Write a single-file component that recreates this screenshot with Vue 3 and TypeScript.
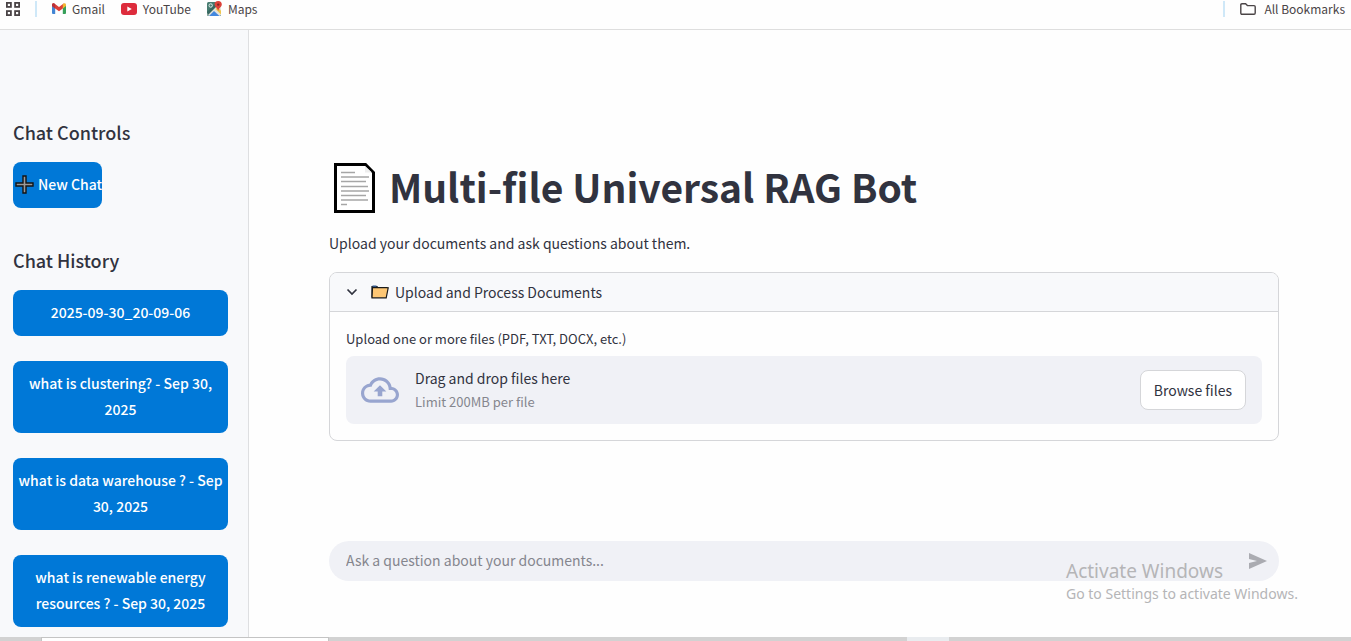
<script setup lang="ts">
import { ref } from 'vue'

const question = ref('')
const picker = ref<HTMLInputElement | null>(null)
const chats: string[] = [
  '2025-09-30_20-09-06',
  'what is clustering? - Sep 30, 2025',
  'what is data warehouse ? - Sep 30, 2025',
  'what is renewable energy resources ? - Sep 30, 2025',
]

function browse(): void {
  picker.value?.click()
}
</script>

<template>
  <div class="screen">
    <nav class="bookmarks" aria-label="Bookmarks">
      <button class="apps" type="button" aria-label="Apps">
        <svg width="14" height="14" viewBox="0 0 14 14" fill="none" stroke="#4a4446" stroke-width="1.8">
          <rect x="0.9" y="0.9" width="4" height="4" /><rect x="9.1" y="0.9" width="4" height="4" />
          <rect x="0.9" y="9.1" width="4" height="4" /><rect x="9.1" y="9.1" width="4" height="4" />
        </svg>
      </button>
      <span class="divider"></span>
      <a class="mark gmail" href="#">
        <svg width="14" height="11" viewBox="0 0 14 11">
          <path d="M0 2v8q0 1 1 1h2.2V4.5z" fill="#4285d4" />
          <path d="M14 2v8q0 1-1 1h-2.2V4.5z" fill="#36a05a" />
          <path d="M0 1.6Q.4 0 2 .3L7 4.1 12 .3 10.8 5.4 7 8.3 3.2 5.4 0 3z" fill="#dc3f38" />
          <path d="M10.8 1.2V5.4L14 3V1.6Q13.7 0 12 .3z" fill="#f2b632" />
          <path d="M0 1.6Q.4 0 2 .3l1.2.9v4.2L0 3z" fill="#b8323a" />
        </svg>
        Gmail
      </a>
      <a class="mark youtube" href="#">
        <svg width="16" height="12" viewBox="0 0 16 12">
          <rect width="16" height="12" rx="3" fill="#dd2c3c" /><path d="M6.3 3.4v5.2L10.8 6z" fill="#fff" />
        </svg>
        YouTube
      </a>
      <a class="mark maps" href="#">
        <svg width="15" height="15" viewBox="0 0 15 15">
          <rect y="1" width="14" height="14" rx="1.5" fill="#477b70" />
          <path d="M0 13 11 2l3 3v8.5L12.5 15H2z" fill="#e6e4dc" />
          <path d="M2 15l5-5 5.5 5z" fill="#4388de" />
          <path d="M0 11 9.5 1.5l2 2L1 14z" fill="#376861" />
          <path d="M8.5 8l5.5 5.5v-4L10.5 6z" fill="#efc64d" />
          <circle cx="3.7" cy="4.5" r="1.7" fill="none" stroke="#dcece8" />
          <path d="M11.2 0a3.6 3.6 0 0 1 3.6 3.6c0 2.4-2.7 3-3.6 6.4-.9-3.4-3.6-4-3.6-6.4A3.6 3.6 0 0 1 11.2 0z" fill="#dc4038" />
          <circle cx="11.2" cy="3.6" r="1.2" fill="#802824" />
        </svg>
        Maps
      </a>
      <span class="divider last"></span>
      <a class="mark all" href="#">
        <svg width="16" height="12" viewBox="0 0 16 12" fill="none" stroke="#4a4446" stroke-width="1.4">
          <path d="M.8 10V2Q.8.8 2 .8h3.6l1.8 1.8H14q1.2 0 1.2 1.2V10q0 1.2-1.2 1.2H2Q.8 11.2.8 10z" />
        </svg>
        All Bookmarks
      </a>
    </nav>

    <div class="body">
      <aside class="sidebar">
        <h2>Chat Controls</h2>
        <button class="chat new" type="button">
          <svg width="19" height="19" viewBox="0 0 19 19">
            <path d="M8 1h3v7h7v3h-7v7H8v-7H1V8h7z" fill="#999" stroke="#141414" stroke-width="1.4" />
          </svg>
          <span>New Chat</span>
        </button>
        <h2 class="history-title">Chat History</h2>
        <div class="history">
          <button v-for="chat in chats" :key="chat" class="chat" type="button">{{ chat }}</button>
        </div>
      </aside>

      <main class="main">
        <h1>
          <svg width="41" height="50" viewBox="0 0 41 50">
            <path d="M1.5 1.5H31.500L39.500 9.500V48.500H1.500z" fill="#fff" stroke="#000" stroke-width="3" />
            <path d="M31 3v6.500H38z" fill="#eee" />
            <path d="M7 9.500h14M7 14h28M7 18.500h25M7 23.500h27M7 28h28M7 32.500h25M7 37h27M7 41.500h6" stroke="#a6a6a6" stroke-width="1.500" />
          </svg>
          <span>Multi-file Universal RAG Bot</span>
        </h1>
        <p class="intro">Upload your documents and ask questions about them.</p>

        <details class="panel" open>
          <summary>
            <svg width="12" height="8" viewBox="0 0 12 8" fill="none" stroke="#31333f" stroke-width="1.7">
              <path d="M1.500 1.500 6 6l4.500-4.500" />
            </svg>
            <svg class="folder" width="18" height="14" viewBox="0 0 18 14">
              <path d="M1 12.500V1.500h5l1 1.500h8v2" fill="#dc9d4f" stroke="#1a1a1a" stroke-width="1.200" />
              <path d="M1.500 2.600h14l1.700.2-2 10H1z" fill="#fec774" stroke="#1a1a1a" stroke-width="1.200" />
              <path d="M1.500 1.300h4" stroke="#32588c" stroke-width="1.500" />
            </svg>
            Upload and Process Documents
          </summary>
          <div class="panel-body">
            <label for="files">Upload one or more files (PDF, TXT, DOCX, etc.)</label>
            <input id="files" ref="picker" type="file" multiple hidden />
            <div class="dropzone">
              <svg width="38" height="38" viewBox="0 0 24 24" fill="#98a5cf">
                <path d="M19.350 10.040C18.670 6.590 15.640 4 12 4 9.110 4 6.600 5.640 5.350 8.040 2.340 8.360 0 10.910 0 14c0 3.310 2.690 6 6 6h13c2.760 0 5-2.240 5-5 0-2.640-2.050-4.780-4.650-4.960zM19 18H6c-2.210 0-4-1.790-4-4s1.790-4 4-4h.71C7.370 7.690 9.480 6 12 6c3.040 0 5.500 2.460 5.500 5.500v.5H19c1.660 0 3 1.340 3 3s-1.340 3-3 3zM8 13h2.550v3h2.900v-3H16l-4-4z" />
              </svg>
              <div class="drop-text">
                <span>Drag and drop files here</span>
                <small>Limit 200MB per file</small>
              </div>
              <button class="browse" type="button" @click="browse">Browse files</button>
            </div>
          </div>
        </details>

        <form class="ask" @submit.prevent>
          <input v-model="question" type="text" placeholder="Ask a question about your documents..." aria-label="Ask a question about your documents" />
          <button type="submit" aria-label="Send">
            <svg width="18" height="16" viewBox="0 0 18 16"><path d="M0 0 18 8 0 16v-6l8-2-8-2z" fill="#aaabb1" /></svg>
          </button>
        </form>
      </main>
    </div>

    <div class="taskbar"><span class="search"></span><span class="active"></span></div>

    <div class="watermark">
      <strong>Activate Windows</strong>
      <span>Go to Settings to activate Windows.</span>
    </div>
  </div>
</template>

<style>
body {
  margin: 0;
  background: #fefefe;
}
</style>

<style scoped>
* {
  box-sizing: border-box;
}
.screen {
  position: relative;
  display: flex;
  flex-direction: column;
  height: 100vh;
  overflow: hidden;
  color: #31333f;
  font: 400 14px/26px "Noto Sans CJK SC", "Noto Sans", sans-serif;
}
button {
  font: inherit;
  color: inherit;
  cursor: pointer;
}
.bookmarks {
  display: flex;
  flex: none;
  align-items: center;
  height: 30px;
  padding: 0 6px 12px;
  border-bottom: 1px solid #dedede;
  font-size: 12px;
  line-height: 18px;
}
.apps {
  display: flex;
  padding: 0;
  border: 0;
  background: none;
}
.divider {
  width: 2px;
  height: 16px;
  margin: 0 15px;
  background: #cfe8f8;
}
.divider.last {
  margin-left: auto;
}
.mark {
  display: flex;
  align-items: center;
  gap: 6px;
  color: #4a4446;
  text-decoration: none;
}
.mark + .mark {
  margin-left: 16px;
}
.mark.all {
  gap: 8px;
}
.body {
  display: flex;
  flex: 1;
  min-height: 0;
}
.sidebar {
  flex: none;
  width: 249px;
  padding: 89px 20px 0 13px;
  overflow: hidden;
  border-right: 1px solid #dedfe1;
  background: #f8f9fb;
}
h2 {
  margin: 0 0 17px;
  font-size: 18px;
  font-weight: 500;
  line-height: 26px;
}
.history-title {
  margin-top: 39px;
}
.history {
  display: flex;
  flex-direction: column;
  gap: 25px;
}
.chat {
  display: block;
  width: 100%;
  padding: 9px 4px 11px;
  border: 0;
  border-radius: 8px;
  background: #0078d7;
  color: #fff;
  font-weight: 500;
  text-align: center;
}
.chat.new {
  display: flex;
  align-items: center;
  gap: 4px;
  width: 89px;
  padding: 9px 2px 11px;
  overflow: hidden;
  white-space: nowrap;
}
.chat.new svg {
  flex: none;
}
.main {
  display: flex;
  flex: 1;
  flex-direction: column;
  min-width: 0;
  padding: 130px 72px 56px 80px;
}
h1 {
  display: flex;
  align-items: center;
  gap: 14px;
  height: 56px;
  margin: 0 0 14px;
  padding-left: 5px;
  font-size: 39px;
  font-weight: 700;
  line-height: 52px;
}
h1 span {
  padding-bottom: 4px;
}
.intro {
  margin: 0 0 16px;
}
.panel {
  overflow: hidden;
  border: 1px solid #d5d6d9;
  border-radius: 8px;
}
summary {
  display: flex;
  align-items: center;
  height: 39px;
  padding: 0 16px;
  border-bottom: 1px solid #d5d6d9;
  background: #f8f9fb;
  list-style: none;
  cursor: pointer;
}
.folder {
  margin: 0 6px 0 13px;
}
.panel-body {
  padding: 16px;
}
label {
  display: block;
  margin-bottom: 6px;
  font-size: 13px;
  line-height: 22px;
}
.dropzone {
  display: flex;
  align-items: center;
  height: 68px;
  padding: 0 16px 0 15px;
  border-radius: 8px;
  background: #f0f1f6;
}
.drop-text {
  display: flex;
  flex: 1;
  flex-direction: column;
  margin-left: 16px;
  line-height: 24px;
}
small {
  color: #85868e;
  font-size: 13px;
}
.browse {
  height: 40px;
  padding: 0 13px;
  border: 1px solid #d5d6d9;
  border-radius: 8px;
  background: #fff;
}
.ask {
  display: flex;
  align-items: center;
  height: 40px;
  margin-top: auto;
  padding: 0 12px 0 17px;
  border-radius: 20px;
  background: #f0f1f6;
}
.ask input {
  flex: 1;
  min-width: 0;
  padding: 0 0 3px;
  border: 0;
  outline: 0;
  background: none;
  color: inherit;
  font: inherit;
}
.ask input::placeholder {
  color: #85868e;
  opacity: 1;
}
.ask button {
  display: flex;
  padding: 0;
  border: 0;
  background: none;
}
.taskbar {
  display: flex;
  flex: none;
  justify-content: space-between;
  height: 4px;
  padding: 0 402px 0 41px;
  background: #d2d2d2;
}
.search {
  width: 288px;
  border: 1px solid #c4c4c4;
  border-bottom: 0;
  background: #fff;
}
.active {
  width: 42px;
  background: #e9ecef;
}
.watermark {
  position: absolute;
  right: 48px;
  bottom: 37px;
  display: flex;
  flex-direction: column;
  min-width: 237px;
  color: #b5b5b7;
  font: 400 14px/20px "Noto Sans", sans-serif;
  pointer-events: none;
}
.watermark strong {
  font-size: 19px;
  font-weight: 400;
  line-height: 26px;
}
</style>
